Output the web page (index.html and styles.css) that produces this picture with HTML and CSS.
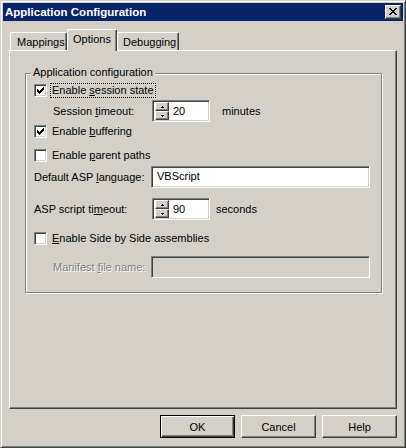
FILE: index.html
```html
<!DOCTYPE html>
<html lang="en">
<head>
  <meta charset="UTF-8" />
  <title>Application Configuration</title>
  <meta name="viewport" content="width=device-width, initial-scale=1" />
  <link rel="stylesheet" href="styles.css">
</head>
<body>

  <div class="window">
    <div class="titlebar">
      <span class="title">Application Configuration</span>
      <button class="close-btn" aria-label="Close">
        <svg width="8" height="7" viewBox="0 0 8 7" shape-rendering="crispEdges">
          <path d="M0 0h2v1H0z M6 0h2v1H6z M1 1h2v1H1z M5 1h2v1H5z M2 2h4v1H2z M3 3h2v1H3z M2 4h4v1H2z M1 5h2v1H1z M5 5h2v1H5z M0 6h2v1H0z M6 6h2v1H6z" fill="#000"/>
        </svg>
      </button>
    </div>

    <div class="client">
      <div class="tabs">
        <div class="tab tab-mappings">Mappings</div>
        <div class="tab tab-options active">Options</div>
        <div class="tab tab-debugging">Debugging</div>
      </div>

      <div class="panel">
        <div class="group">
          <span class="legend">Application configuration</span>

          <div class="row row-check">
            <span class="check">
              <svg width="7" height="7" viewBox="0 0 7 7" shape-rendering="crispEdges"><path d="M0 2h1v3H0z M1 3h1v3H1z M2 4h1v3H2z M3 3h1v3H3z M4 2h1v3H4z M5 1h1v3H5z M6 0h1v3H6z" fill="#000"/></svg>
            </span>
            <span class="check-label focused">Enable <u>s</u>ession state</span>
          </div>

          <div class="row row-spin sp-session">
            <span class="label label-indent">Session <u>t</u>imeout:</span>
            <div class="spin">
              <div class="spin-btns">
                <span class="spin-btn"><svg width="3" height="2" viewBox="0 0 3 2" shape-rendering="crispEdges"><path d="M1 0h1v1H1z M0 1h3v1H0z" fill="#000"/></svg></span>
                <span class="spin-btn"><svg width="3" height="2" viewBox="0 0 3 2" shape-rendering="crispEdges"><path d="M0 0h3v1H0z M1 1h1v1H1z" fill="#000"/></svg></span>
              </div>
              <span class="spin-val">20</span>
            </div>
            <span class="unit unit-minutes">minutes</span>
          </div>

          <div class="row row-check cb-buffer">
            <span class="check">
              <svg width="7" height="7" viewBox="0 0 7 7" shape-rendering="crispEdges"><path d="M0 2h1v3H0z M1 3h1v3H1z M2 4h1v3H2z M3 3h1v3H3z M4 2h1v3H4z M5 1h1v3H5z M6 0h1v3H6z" fill="#000"/></svg>
            </span>
            <span class="check-label">Enable <u>b</u>uffering</span>
          </div>

          <div class="row row-check cb-parent">
            <span class="check"></span>
            <span class="check-label">Enable <u>p</u>arent paths</span>
          </div>

          <div class="row row-field fd-lang">
            <span class="label">Default ASP <u>l</u>anguage:</span>
            <div class="field">VBScript</div>
          </div>

          <div class="row row-spin sp-script">
            <span class="label">ASP script ti<u>m</u>eout:</span>
            <div class="spin">
              <div class="spin-btns">
                <span class="spin-btn"><svg width="3" height="2" viewBox="0 0 3 2" shape-rendering="crispEdges"><path d="M1 0h1v1H1z M0 1h3v1H0z" fill="#000"/></svg></span>
                <span class="spin-btn"><svg width="3" height="2" viewBox="0 0 3 2" shape-rendering="crispEdges"><path d="M0 0h3v1H0z M1 1h1v1H1z" fill="#000"/></svg></span>
              </div>
              <span class="spin-val">90</span>
            </div>
            <span class="unit">seconds</span>
          </div>

          <div class="row row-check cb-sxs">
            <span class="check"></span>
            <span class="check-label"><u>E</u>nable Side by Side assemblies</span>
          </div>

          <div class="row row-field fd-manifest">
            <span class="label label-indent disabled">Manifest <u>f</u>ile name:</span>
            <div class="field field-disabled"></div>
          </div>
        </div>
      </div>

      <div class="buttons">
        <button class="btn btn-default">OK</button>
        <button class="btn">Cancel</button>
        <button class="btn">Help</button>
      </div>
    </div>
  </div>

</body>
</html>
```

FILE: styles.css
```css
:root {
  --face: #d4d0c8;
  --light: #ffffff;
  --shadow: #808080;
  --dark: #404040;
  --title: #0a246a;
}

body {
  margin: 0;
  font-family: 'Liberation Sans', Arial, sans-serif;
  font-size: 11px;
  line-height: 13px;
  color: #000;
  background: var(--face);
}

.window {
  width: 406px;
  height: 448px;
  box-sizing: border-box;
  background: var(--face);
  border: 1px solid;
  border-color: var(--face) var(--dark) var(--dark) var(--face);
  box-shadow: inset 1px 1px 0 var(--light), inset -1px -1px 0 var(--shadow);
  padding: 2px;
  display: flex;
  flex-direction: column;
}

/* title bar */
.titlebar {
  height: 18px;
  background: var(--title);
  display: flex;
  align-items: center;
  justify-content: space-between;
  padding: 0 2px 0 2px;
  flex: none;
}

.title {
  color: #fff;
  font-weight: bold;
  font-size: 11.5px;
}

.close-btn {
  width: 16px;
  height: 14px;
  padding: 0;
  margin: 0;
  background: var(--face);
  border: 1px solid;
  border-color: var(--light) var(--dark) var(--dark) var(--light);
  box-shadow: inset -1px -1px 0 var(--shadow);
  display: flex;
  align-items: center;
  justify-content: center;
  box-sizing: border-box;
}

.close-btn svg {
  display: block;
  margin: 0 0 1px 0;
}

/* client area */
.client {
  flex: 1;
  display: flex;
  flex-direction: column;
  padding: 8px 6px 0 6px;
}

.tabs {
  height: 21px;
  display: flex;
  align-items: flex-end;
  padding-left: 1px;
  flex: none;
}

.tab {
  height: 18px;
  box-sizing: border-box;
  border: 1px solid var(--light);
  border-bottom: none;
  border-right-color: var(--dark);
  border-radius: 2px 2px 0 0;
  box-shadow: inset -1px 0 0 var(--shadow);
  padding: 3px 0 0 6px;
  background: var(--face);
}

.tab-mappings { width: 57px; }
.tab-options { width: 50px; padding-left: 5px; }
.tab-debugging { width: 62px; padding-left: 5px; }

.tab.active {
  height: 22px;
  margin-bottom: -1px;
  position: relative;
  z-index: 1;
}

.panel {
  height: 359px;
  box-sizing: border-box;
  flex: none;
  border: 1px solid;
  border-color: var(--light) var(--dark) var(--dark) var(--light);
  box-shadow: inset -1px -1px 0 var(--shadow);
  padding: 22px 14px 0 15px;
}

/* group box */
.group {
  position: relative;
  border: 1px solid var(--shadow);
  box-shadow: inset 1px 1px 0 var(--light), 1px 1px 0 var(--light);
  padding: 10px 8px 14px 8px;
}

.legend {
  position: absolute;
  top: -8px;
  left: 5px;
  padding: 0 2px;
  background: var(--face);
}

.row {
  display: flex;
  align-items: center;
}

.row-check { height: 13px; }
.row-spin, .row-field { height: 22px; }

.sp-session { margin-top: 3px; }
.cb-buffer { margin-top: 3px; }
.cb-parent { margin-top: 11px; }
.fd-lang { margin-top: 4px; }
.sp-script { margin-top: 10px; }
.cb-sxs { margin-top: 12px; }
.fd-manifest { margin-top: 11px; }

.check {
  width: 13px;
  height: 13px;
  box-sizing: border-box;
  background: #fff;
  border: 1px solid;
  border-color: var(--shadow) var(--light) var(--light) var(--shadow);
  box-shadow: inset 1px 1px 0 var(--dark), inset -1px -1px 0 var(--face);
  padding: 2px 0 0 2px;
  flex: none;
}

.check svg {
  display: block;
}

.check-label {
  margin-left: 3px;
  padding: 0 1px;
  border: 1px solid transparent;
}

.check-label.focused {
  border: 1px dotted #000;
}

.label {
  width: 117px;
  flex: none;
}

.label-indent {
  width: 98px;
  padding-left: 19px;
}

.disabled {
  color: var(--shadow);
  text-shadow: 1px 1px 0 var(--light);
}

/* sunken controls */
.field, .spin {
  height: 22px;
  box-sizing: border-box;
  background: #fff;
  border: 1px solid;
  border-color: var(--shadow) var(--light) var(--light) var(--shadow);
  box-shadow: inset 1px 1px 0 var(--dark), inset -1px -1px 0 var(--face);
}

.field {
  width: 219px;
  padding: 3px 0 0 5px;
}

.field-disabled {
  background: var(--face);
}

.spin {
  width: 58px;
  margin-left: 1px;
  display: flex;
  align-items: center;
  padding: 1px;
}

.spin-btns {
  width: 14px;
  height: 18px;
  margin-left: 1px;
  display: flex;
  flex-direction: column;
  flex: none;
}

.spin-btn {
  height: 9px;
  box-sizing: border-box;
  background: var(--face);
  border: 1px solid;
  border-color: var(--light) var(--dark) var(--dark) var(--light);
  box-shadow: inset -1px -1px 0 var(--shadow);
  display: flex;
  align-items: center;
  justify-content: center;
}

.spin-btn svg {
  display: block;
}

.spin-val {
  padding-left: 4px;
}

.unit {
  margin-left: 6px;
}

.unit-minutes {
  margin-left: 12px;
}

/* dialog buttons */
.buttons {
  display: flex;
  justify-content: flex-end;
  gap: 6px;
  margin-top: 6px;
}

.btn {
  width: 75px;
  height: 23px;
  box-sizing: border-box;
  margin: 0;
  padding: 0;
  font-family: inherit;
  font-size: 11px;
  color: #000;
  background: var(--face);
  border: 1px solid;
  border-color: var(--light) var(--dark) var(--dark) var(--light);
  box-shadow: inset -1px -1px 0 var(--shadow);
}

.btn-default {
  border-color: #000;
  box-shadow: inset 1px 1px 0 var(--light), inset -1px -1px 0 var(--dark), inset -2px -2px 0 var(--shadow);
}
```
